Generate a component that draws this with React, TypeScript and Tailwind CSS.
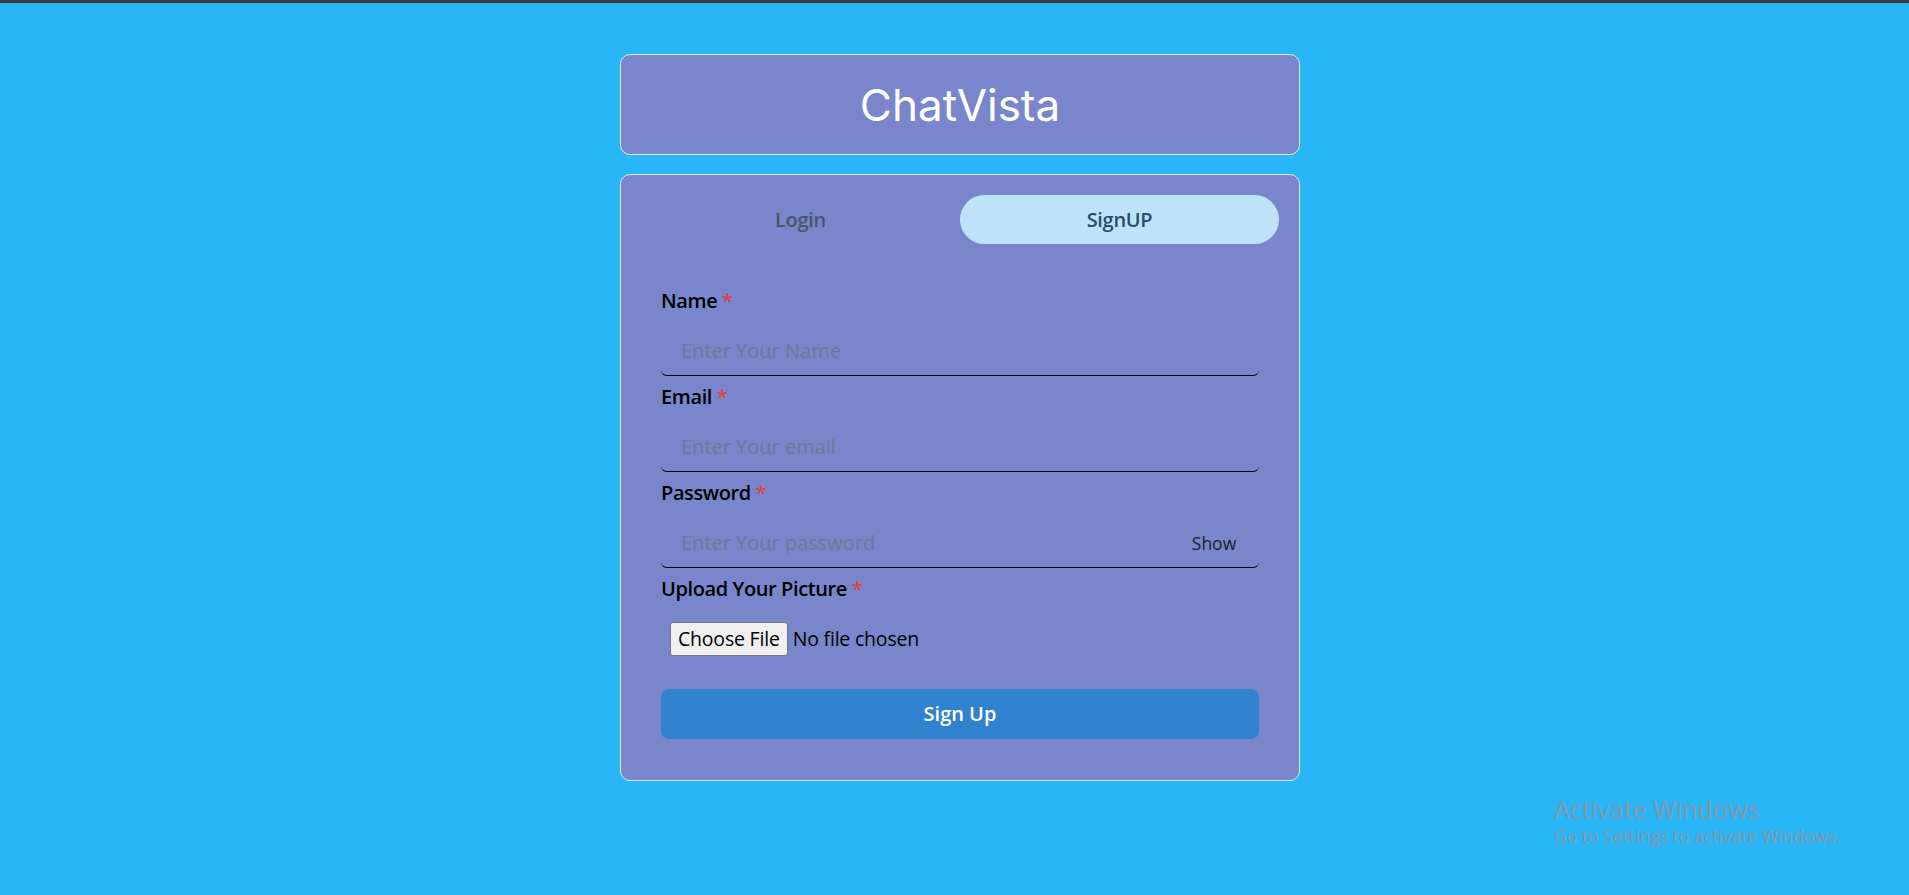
const Field = ({
  label,
  placeholder,
  show,
}: {
  label: string;
  placeholder: string;
  show?: boolean;
}) => {
  return (
    <div className="flex flex-col">
      <label className="mb-[10px] h-[30px] text-[20px] leading-[30px] font-semibold tracking-[-0.4px] text-black">
        {label} <span className="text-[#e53e3e]">*</span>
      </label>
      <div className="relative">
        <input
          placeholder={placeholder}
          className="h-[50px] w-full rounded-[6px] border-b border-black bg-transparent px-[20px] text-[20px] outline-none placeholder:text-[#6b7b96]"
        />
        {show && (
          <div className="absolute top-0 right-0 flex h-[50px] w-[90px] items-center justify-center">
            <span className="text-[17.5px] font-medium text-[#1a202c]">Show</span>
          </div>
        )}
      </div>
    </div>
  );
};

const App = () => {
  return (
    <div className="relative min-h-screen bg-[#29b6f6] font-['Open_Sans',sans-serif]">
      <div className="h-[3px] bg-[#3c3c3c]" />

      <div className="flex justify-center pt-[51px] pl-[11px]">
        <div className="w-[680px]">
          <div className="flex h-[101px] items-center justify-center rounded-[10px] border border-[#e2e8f0] bg-[#7986cb]">
            <h1 className="font-['Inter',sans-serif] text-[44px] font-normal text-white">ChatVista</h1>
          </div>

          <div className="mt-[19px] rounded-[10px] border border-[#e2e8f0] bg-[#7986cb] px-[20px] pt-[20px] pb-[21px]">
            <div className="flex h-[49px]">
              <div className="flex flex-1 items-center justify-center rounded-full text-[20px] font-semibold tracking-[-0.3px] text-[#4a5568]">
                Login
              </div>
              <div className="flex flex-1 items-center justify-center rounded-full bg-[#bee3f8] text-[20px] font-semibold tracking-[-0.3px] text-[#2c4a6e]">
                SignUP
              </div>
            </div>

            <div className="mt-[22px] flex flex-col gap-[6px] p-[20px]">
              <Field label="Name" placeholder="Enter Your Name" />
              <Field label="Email" placeholder="Enter Your email" />
              <Field label="Password" placeholder="Enter Your password" show />

              <div className="flex flex-col">
                <label className="mb-[10px] h-[30px] text-[20px] leading-[30px] font-semibold tracking-[-0.4px] text-black">
                  Upload Your Picture <span className="text-[#e53e3e]">*</span>
                </label>
                <div className="flex h-[50px] items-center pl-[9px] text-[19.5px] tracking-[-0.2px] text-black">
                  <span className="flex h-[34px] items-center rounded-[3px] border border-[#767676] bg-[#efefef] px-[7px]">
                    Choose File
                  </span>
                  <span className="ml-[5px]">No file chosen</span>
                </div>
              </div>

              <button className="mt-[19px] h-[50px] w-full rounded-[8px] bg-[#3182ce] text-[20px] font-semibold text-white">
                Sign Up
              </button>
            </div>
          </div>
        </div>
      </div>

      <div className="absolute top-[794px] left-[1554px] text-[#8696ab]">
        <p className="text-[25px] leading-[30px]">Activate Windows</p>
        <p className="text-[17.5px] leading-[24px]">Go to Settings to activate Windows.</p>
      </div>
    </div>
  );
};

export default App;
